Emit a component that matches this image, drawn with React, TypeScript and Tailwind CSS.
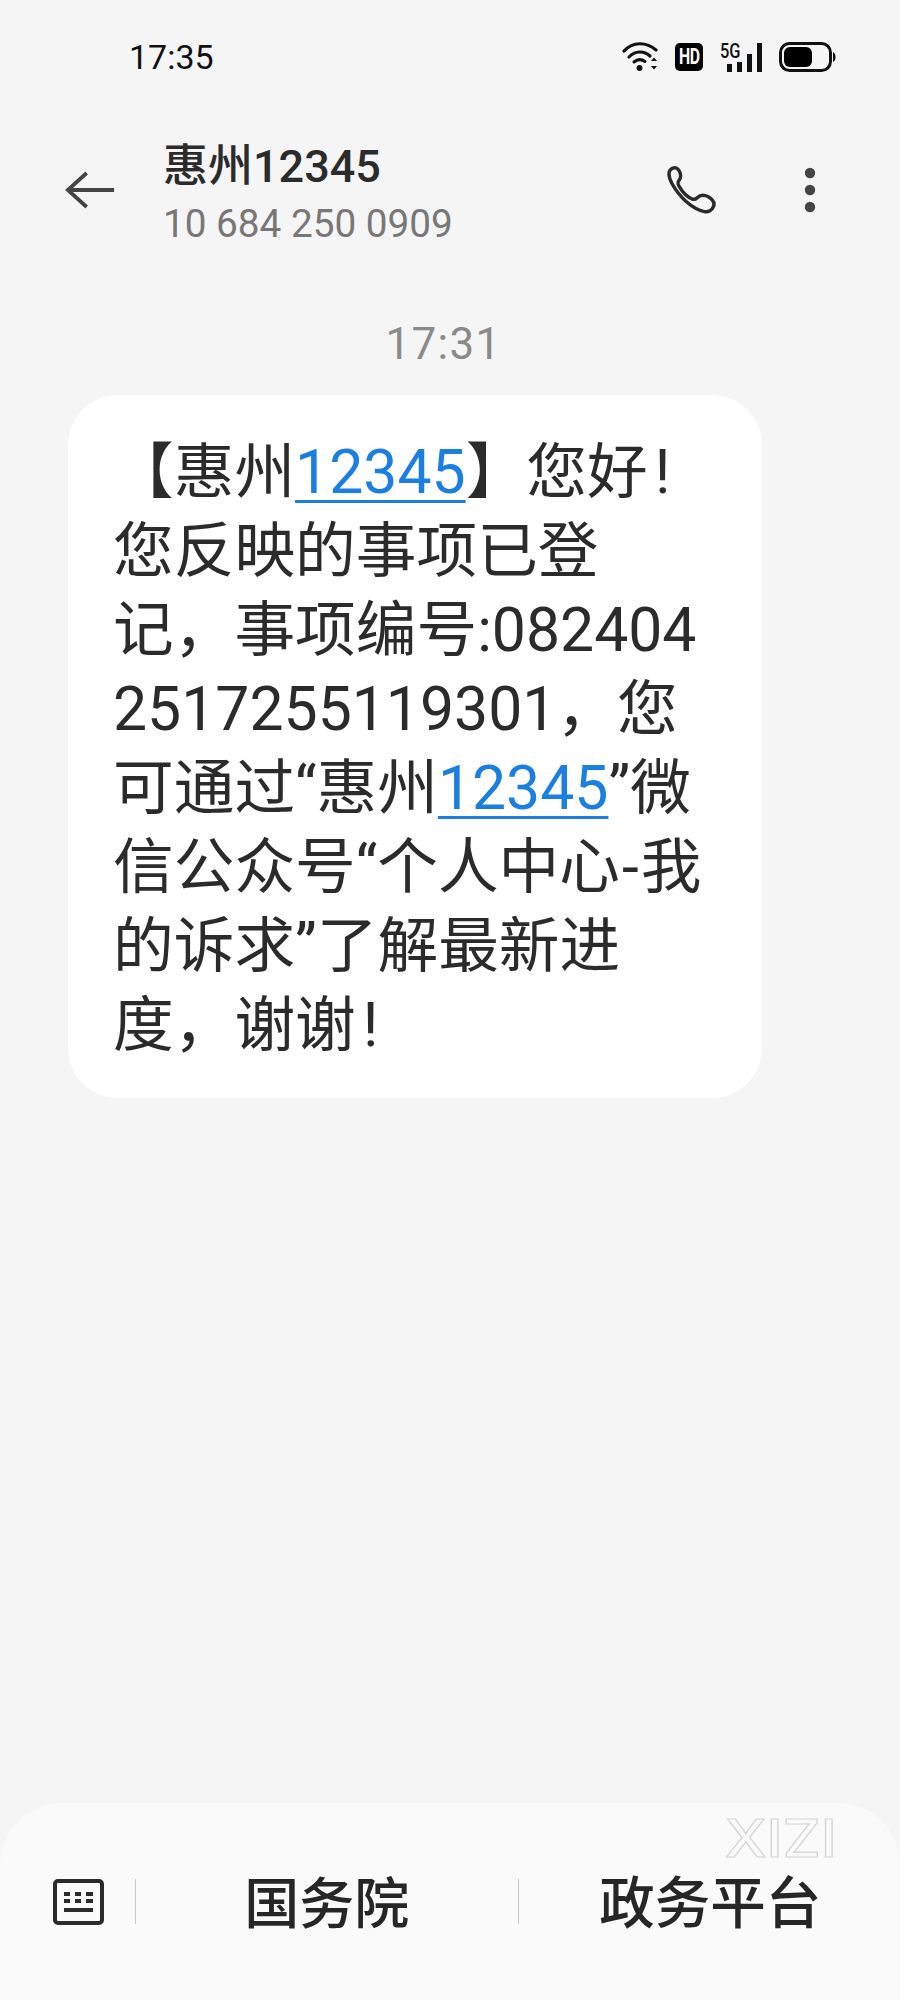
import React from "react";

const Link = ({ children }: { children: React.ReactNode }) => (
  <span className="text-[#1a7fe0] underline decoration-[3px] underline-offset-[7px]">{children}</span>
);

const Line = ({ children }: { children: React.ReactNode }) => (
  <div className="h-[79px] leading-[79px] whitespace-nowrap">{children}</div>
);

export default function App() {
  return (
    <div className="relative w-[900px] h-[2000px] flex flex-col overflow-hidden bg-[#f5f5f5] text-[#2b2b2b] font-['Roboto','Noto_Sans_CJK_SC',sans-serif]">
      <div className="h-[114px] flex items-center pl-[129px] pr-[64px] justify-between shrink-0">
        <span className="text-[34px] leading-none text-[#111]">17:35</span>
        <div className="flex items-center">
          <svg width="38" height="30" viewBox="0 0 38 30" fill="none" stroke="#111" strokeLinecap="round">
            <path d="M2 9 C11 -0.5 24 -0.5 34 8" strokeWidth="3.2" />
            <path d="M7 15 C13 8.5 22 8.5 28 14" strokeWidth="3.2" />
            <path d="M12 20 C15.5 17 19.5 17 23 19.5" strokeWidth="3" />
            <circle cx="17.5" cy="26" r="3" fill="#111" stroke="none" />
            <path d="M29 19 L32 15.5 L35 19 Z M29 24 L32 27.5 L35 24 Z" fill="#111" stroke="none" />
          </svg>
          <div className="ml-[15px] w-[28px] h-[28px] rounded-[5px] bg-black flex items-center justify-center">
            <span className="text-white text-[22px] font-bold leading-none scale-x-[0.72] tracking-[-0.5px]">HD</span>
          </div>
          <div className="relative ml-[17px] w-[42px] h-[29px] flex items-end justify-end gap-[5px]">
            <span className="absolute left-0 top-[-1px] text-[21px] font-medium leading-[18px] text-[#111] scale-x-[0.78] origin-left">5G</span>
            <div className="w-[5px] h-[8px] bg-[#111]" />
            <div className="w-[5px] h-[10px] bg-[#111]" />
            <div className="w-[5px] h-[18px] bg-[#111]" />
            <div className="w-[5px] h-[29px] bg-[#111]" />
          </div>
          <svg className="ml-[17px]" width="57" height="30" viewBox="0 0 57 30" fill="none">
            <rect x="1.5" y="1.5" width="50" height="27" rx="9" stroke="#111" strokeWidth="3" />
            <rect x="5" y="5" width="28" height="20" rx="6" fill="#000" />
            <path d="M54 10 C56 11 56.5 13 56.5 15 C56.5 17 56 19 54 20 Z" fill="#111" />
          </svg>
        </div>
      </div>

      <div className="h-[152px] flex items-center shrink-0">
        <svg className="ml-[65px] shrink-0" width="50" height="38" viewBox="0 0 53 40" fill="none" stroke="#444" strokeWidth="4">
          <path d="M23 2 L3 20 L23 38" strokeLinejoin="miter" />
          <path d="M4 20 H52" />
        </svg>
        <div className="ml-[48px] mt-[8px] flex flex-col">
          <span className="text-[45px] leading-[50px] font-medium text-[#2b2b2b]">惠州12345</span>
          <span className="mt-[9px] text-[38.7px] leading-[46px] text-[#777]">10 684 250 0909</span>
        </div>
        <svg className="ml-auto shrink-0" width="52" height="48" viewBox="0 0 54 50" fill="none" stroke="#2b2b2b" strokeWidth="3.6" strokeLinejoin="round">
          <path d="M5 4.5 C8 1 12 1 14 4 C16.5 7.5 17 12 14.5 15 C13 17 13 18 14.5 21 C18 27 23 32.5 28.5 34.5 C30.5 35.2 32 34.5 33.5 33 C36 30.5 40 29.5 45 32 C50 35 52 38 50.5 42 C49 46 45 48.5 41 47.5 C29 45 15 33 7 18 C4 12 3 8 5 4.5 Z" />
        </svg>
        <svg className="ml-[87px] mr-[84px] shrink-0" width="12" height="46" viewBox="0 0 12 46" fill="#444">
          <circle cx="6" cy="6" r="5.2" />
          <circle cx="6" cy="23" r="5.2" />
          <circle cx="6" cy="40" r="5.2" />
        </svg>
      </div>

      <div className="mt-[50px] mb-[23px] h-[56px] flex items-center justify-center text-[44px] leading-none text-[#8a8a8a] shrink-0 tracking-[1.3px]">
        <span className="mr-[13px]">17:31</span>
      </div>

      <div className="ml-[68px] w-[694px] h-[703px] rounded-[50px] bg-white pl-[45px] pt-[38px] text-[60.7px] text-[#2b2b2b] shrink-0">
        <Line>【惠州<Link>12345</Link>】您好<span className="ml-[7px]">!</span></Line>
        <Line>您反映的事项已登</Line>
        <Line>记，事项编号:082404</Line>
        <Line>2517255119301，您</Line>
        <Line>可通过“惠州<Link>12345</Link>”微</Line>
        <Line>信公众号“个人中心<span className="mx-[2px]">-</span>我</Line>
        <Line>的诉求”了解最新进</Line>
        <Line>度，谢谢<span className="ml-[7px]">!</span></Line>
      </div>

      <div className="relative mt-auto h-[197px] rounded-t-[62px] bg-[#fafafa] flex items-center shrink-0">
        <span className="absolute left-[725px] top-[17px] text-[52px] leading-[38px] font-medium text-transparent [-webkit-text-stroke:1.2px_#d4d4d4] scale-x-[1.14] origin-left font-['Inter',sans-serif]">XIZI</span>
        <div className="w-[136px] h-[45px] flex items-center border-r border-[#c8c8c8] shrink-0 pl-[53px]">
          <svg width="51" height="46" viewBox="0 0 51 46" fill="none">
            <rect x="2" y="2" width="47" height="42" rx="3" stroke="#2b2b2b" strokeWidth="4" />
            <path d="M11 13h6v4h-6z M22 13h6v4h-6z M33 13h7v4h-7z M11 20h6v4h-6z M22 20h6v4h-6z M33 20h7v4h-7z" fill="#2b2b2b" />
            <path d="M11 29h29v4H11z" fill="#2b2b2b" />
          </svg>
        </div>
        <div className="flex-1 h-[45px] flex items-center justify-center border-r border-[#c8c8c8]">
          <span className="text-[55px] leading-none font-medium text-[#262626] translate-y-[3px]">国务院</span>
        </div>
        <div className="flex-1 h-[45px] flex items-center justify-center">
          <span className="text-[55.5px] leading-none font-medium text-[#262626] translate-x-[1px] translate-y-[3px]">政务平台</span>
        </div>
      </div>
    </div>
  );
}
